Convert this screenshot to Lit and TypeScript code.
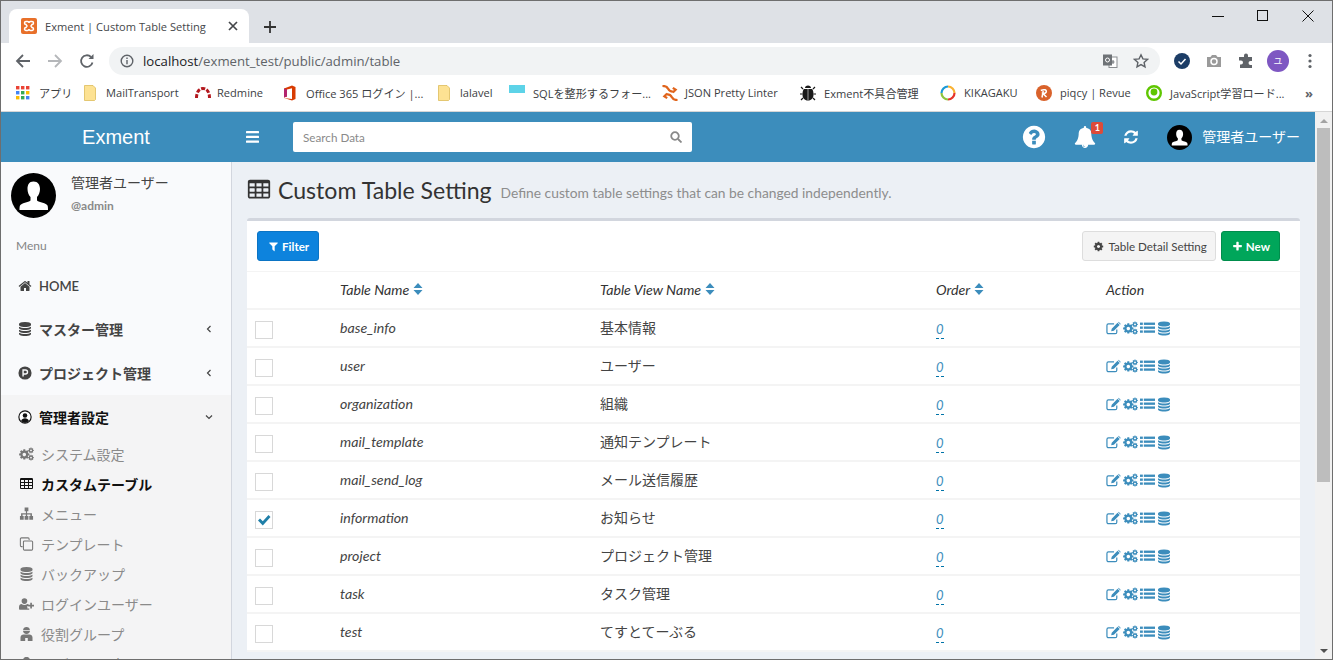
import { LitElement, html, css, svg } from "lit";
import { customElement } from "lit/decorators.js";

// font-awesome 4 style glyphs, 1792 box
const P = {
  database: "M896 768q237 0 443-43t325-127v170q0 69-103 128t-280 93.5-385 34.5-385-34.5-280-93.5-103-128v-170q119 84 325 127t443 43zm0 768q237 0 443-43t325-127v170q0 69-103 128t-280 93.5-385 34.5-385-34.5-280-93.5-103-128v-170q119 84 325 127t443 43zm0-384q237 0 443-43t325-127v170q0 69-103 128t-280 93.5-385 34.5-385-34.5-280-93.5-103-128v-170q119 84 325 127t443 43zm0-1152q208 0 385 34.5t280 93.5 103 128v128q0 69-103 128t-280 93.5-385 34.5-385-34.5-280-93.5-103-128v-128q0-69 103-128t280-93.5 385-34.5z",
  table: "M576 1376v-192q0-14-9-23t-23-9h-320q-14 0-23 9t-9 23v192q0 14 9 23t23 9h320q14 0 23-9t9-23zm0-384v-192q0-14-9-23t-23-9h-320q-14 0-23 9t-9 23v192q0 14 9 23t23 9h320q14 0 23-9t9-23zm512 384v-192q0-14-9-23t-23-9h-320q-14 0-23 9t-9 23v192q0 14 9 23t23 9h320q14 0 23-9t9-23zm-512-768v-192q0-14-9-23t-23-9h-320q-14 0-23 9t-9 23v192q0 14 9 23t23 9h320q14 0 23-9t9-23zm512 384v-192q0-14-9-23t-23-9h-320q-14 0-23 9t-9 23v192q0 14 9 23t23 9h320q14 0 23-9t9-23zm512 384v-192q0-14-9-23t-23-9h-320q-14 0-23 9t-9 23v192q0 14 9 23t23 9h320q14 0 23-9t9-23zm-512-768v-192q0-14-9-23t-23-9h-320q-14 0-23 9t-9 23v192q0 14 9 23t23 9h320q14 0 23-9t9-23zm512 384v-192q0-14-9-23t-23-9h-320q-14 0-23 9t-9 23v192q0 14 9 23t23 9h320q14 0 23-9t9-23zm0-384v-192q0-14-9-23t-23-9h-320q-14 0-23 9t-9 23v192q0 14 9 23t23 9h320q14 0 23-9t9-23zm128-320v1088q0 66-47 113t-113 47h-1344q-66 0-113-47t-47-113v-1088q0-66 47-113t113-47h1344q66 0 113 47t47 113z",
  filter: "M1595 295q17 41-14 70l-493 493v742q0 42-39 59-13 5-25 5-27 0-45-19l-256-256q-19-19-19-45v-486l-493-493q-31-29-14-70 17-39 59-39h1280q42 0 59 39z",
  bell: "M912 1696q0-16-16-16-59 0-101.5-42.5t-42.5-101.5q0-16-16-16t-16 16q0 73 51.5 124.5t124.5 51.5q16 0 16-16zm816-288q0 52-38 90t-90 38h-448q0 106-75 181t-181 75-181-75-75-181h-448q-52 0-90-38t-38-90q50-42 91-88t85-119.5 74.5-158.5 50-206 19.5-260q0-152 117-282.5t307-158.5q-8-19-8-39 0-40 28-68t68-28 68 28 28 68q0 20-8 39 190 28 307 158.5t117 282.5q0 139 19.5 260t50 206 74.5 158.5 85 119.5 91 88z",
  refresh: "M1639 1056q0 5-1 7-64 268-268 434.5t-478 166.5q-146 0-282.5-55t-243.5-157l-129 129q-19 19-45 19t-45-19-19-45v-448q0-26 19-45t45-19h448q26 0 45 19t19 45-19 45l-137 137q71 66 161 102t187 36q134 0 250-65t186-179q11-17 53-117 8-23 30-23h192q13 0 22.5 9.5t9.5 22.5zm25-800v448q0 26-19 45t-45 19h-448q-26 0-45-19t-19-45 19-45l138-138q-148-137-349-137-134 0-250 65t-186 179q-11 17-53 117-8 23-30 23h-199q-13 0-22.5-9.5t-9.5-22.5v-7q65-268 270-434.5t480-166.5q146 0 284 55.5t245 156.5l130-129q19-19 45-19t45 19 19 45z",
  question: "M1024 1376v-192q0-14-9-23t-23-9h-192q-14 0-23 9t-9 23v192q0 14 9 23t23 9h192q14 0 23-9t9-23zm256-672q0-88-55.5-163t-138.5-116-170-41q-243 0-371 213-15 24 8 42l132 100q7 6 19 6 16 0 25-12 53-68 86-92 34-24 86-24 48 0 85.5 26t37.5 59q0 38-20 61t-68 45q-63 28-115.5 86.5t-52.5 125.5v36q0 14 9 23t23 9h192q14 0 23-9t9-23q0-19 21.5-49.5t54.5-49.5q32-18 49-28.5t46-35 44.5-48 28-60.5 12.5-81zm384 192q0 209-103 385.5t-279.5 279.5-385.5 103-385.5-103-279.5-279.5-103-385.5 103-385.5 279.5-279.5 385.5-103 385.5 103 279.5 279.5 103 385.5z",
  plus: "M1600 736v192q0 40-28 68t-68 28h-416v416q0 40-28 68t-68 28h-192q-40 0-68-28t-28-68v-416h-416q-40 0-68-28t-28-68v-192q0-40 28-68t68-28h416v-416q0-40 28-68t68-28h192q40 0 68 28t28 68v416h416q40 0 68 28t28 68z",
  cog: "M1152 896q0-106-75-181t-181-75-181 75-75 181 75 181 181 75 181-75 75-181zm512-109v222q0 12-8 23t-20 13l-185 28q-19 54-39 91 35 50 107 138 10 12 10 25t-9 23q-27 37-99 108t-94 71q-12 0-26-9l-138-108q-44 23-91 38-16 136-29 186-7 28-36 28h-222q-14 0-24.5-8.5t-11.5-21.5l-28-184q-49-16-90-37l-141 107q-10 9-25 9-14 0-25-11-126-114-165-168-7-10-7-23 0-12 8-23 15-21 51-66.5t54-70.5q-27-50-41-99l-183-27q-13-2-21-12.5t-8-23.5v-222q0-12 8-23t19-13l186-28q14-46 39-92-40-57-107-138-10-12-10-24 0-10 9-23 26-36 98.5-107.5t94.5-71.5q13 0 26 10l138 107q44-23 91-38 16-136 29-186 7-28 36-28h222q14 0 24.5 8.5t11.5 21.5l28 184q49 16 90 37l142-107q9-9 24-9 13 0 25 10 129 119 165 170 7 8 7 22 0 12-8 23-15 21-51 66.5t-54 70.5q26 50 41 98l183 28q13 2 21 12.5t8 23.5z",
  home: "M1472 992v480q0 26-19 45t-45 19h-384v-384h-256v384h-384q-26 0-45-19t-19-45v-480q0-1 .5-3t.5-3l575-474 575 474q1 2 1 6zm223-69l-62 74q-8 9-21 11h-3q-13 0-21-7l-692-577-692 577q-12 8-24 7-13-2-21-11l-62-74q-8-10-7-23.5t11-21.5l719-599q32-26 76-26t76 26l244 204v-195q0-14 9-23t23-9h192q14 0 23 9t9 23v408l219 182q10 8 11 21.5t-7 23.5z",
};

const fa = (d: string, cls = "") => html`<svg class="fa ${cls}" viewBox="0 0 1792 1792" fill="currentColor"><path d=${d}></path></svg>`;

const cogs = (cls = "") => html`<svg class="fa ${cls}" viewBox="0 0 2048 1792" fill="currentColor">
  <path transform="translate(-100 130) scale(.92)" d=${P.cog}></path>
  <path transform="translate(1190 -40) scale(.5)" d=${P.cog}></path>
  <path transform="translate(1190 940) scale(.5)" d=${P.cog}></path>
</svg>`;

const list = (cls = "") => html`<svg class="fa ${cls}" viewBox="0 0 18 14" fill="currentColor">
  ${[0.5, 5.2, 9.9].map((y) => svg`<rect x="0" y=${y} width="3.4" height="2.8"></rect><rect x="4.6" y=${y} width="13.4" height="2.8"></rect>`)}
</svg>`;

const edit = (cls = "") => html`<svg class="fa ${cls}" viewBox="0 0 16 14">
  <path d="M11.5 8.5v3a1.6 1.6 0 0 1-1.6 1.6H2.6A1.6 1.6 0 0 1 1 11.500V4.200a1.600 1.600 0 0 1 1.600-1.600h6" fill="none" stroke="currentColor" stroke-width="1.300"></path>
  <path d="M5.500 10.500l.6-2.800 6.200-6.200 2.300 2.300-6.200 6.200zM12.900 .9l.6-.6 2.300 2.300-.6.600z" fill="currentColor"></path>
</svg>`;

const avatar = (cls = "") => html`<svg class="avatar ${cls}" viewBox="0 0 45 45">
  <circle cx="22.500" cy="22.500" r="22.500" fill="#000"></circle>
  <path fill="#fff" d="M22.500 8.500c4.500 0 6.500 3.500 6.500 7.500 0 3.200-1.200 6.200-3 8v3.500c2 1.800 9.500 2.500 10.500 5 .5 1.200.5 3 .5 4.500H8.500c0-1.500 0-3.300.5-4.500 1-2.500 8.500-3.200 10.500-5V24c-1.800-1.800-3-4.800-3-8 0-4 1.500-7.500 6-7.500z"></path>
</svg>`;

const sub = {
  sitemap: html`<svg class="fa" viewBox="0 0 16 14" fill="currentColor"><path d="M6 0h4v4H8.600v2.200h5.200V9H15v4h-4V9h1.200V7.600H8.700V9H10v4H6V9h1.300V7.600H3.800V9H5v4H1V9h1.200V6.200h5.200V4H6z"></path></svg>`,
  clone: html`<svg class="fa" viewBox="0 0 16 16" fill="none" stroke="currentColor" stroke-width="1.200"><path d="M11 3.500V2.200a1.200 1.200 0 0 0-1.200-1.200H2.200A1.200 1.200 0 0 0 1 2.200v7.600A1.200 1.200 0 0 0 2.200 11h1.300"></path><rect x="4.500" y="4.500" width="10.500" height="10.500" rx="1.200"></rect></svg>`,
  userPlus: html`<svg class="fa" viewBox="0 0 18 14" fill="currentColor"><circle cx="6.500" cy="3.500" r="3.400"></circle><path d="M0 13v-2.500C0 8.500 1.500 7 3 7c1 .8 2.200 1.200 3.500 1.200S9 7.800 10 7c.6 0 1.200.3 1.700.7v1.800H10v3h2.300V14H1a1 1 0 0 1-1-1zM13.500 5.500h2v2.500H18v2h-2.500v2.500h-2V10H11V8h2.500z"></path></svg>`,
  group: html`<svg class="fa" viewBox="0 0 14 14" fill="currentColor"><path d="M7 0c2 0 3.200 1 3.400 3H3.600C3.800 1 5 0 7 0zM3.500 3.800h7c0 1.800-1.500 3.200-3.500 3.200S3.500 5.600 3.500 3.800zM1 14v-3.500C1 8.800 2.500 7.500 4 7.500h6c1.500 0 3 1.300 3 3V14H8.300v-3H5.700v3z"></path></svg>`,
};

const tableRows: { name: string; view: string; checked?: boolean }[] = [
  { name: "base_info", view: "基本情報" },
  { name: "user", view: "ユーザー" },
  { name: "organization", view: "組織" },
  { name: "mail_template", view: "通知テンプレート" },
  { name: "mail_send_log", view: "メール送信履歴" },
  { name: "information", view: "お知らせ", checked: true },
  { name: "project", view: "プロジェクト管理" },
  { name: "task", view: "タスク管理" },
  { name: "test", view: "てすとてーぶる" },
];

const folder = html`<svg class="bm-icon" viewBox="0 0 16 16"><path d="M2.500 .5h8.500l2.500 2.500v11.500l-1 1h-10z" fill="#fde293" stroke="#d9b44a" stroke-width=".7"></path></svg>`;

const bookmarks = [
  {
    text: "アプリ",
    icon: html`<svg class="bm-icon apps" viewBox="0 0 14 14">
      ${["#ea4335", "#ea4335", "#ea4335", "#4285f4", "#34a853", "#fbbc04", "#fbbc04", "#34a853", "#4285f4"].map(
        (c, i) => svg`<rect x=${(i % 3) * 5} y=${Math.floor(i / 3) * 5} width="3.400" height="3.400" fill=${c}></rect>`
      )}
    </svg>`,
  },
  { text: "MailTransport", icon: folder },
  {
    text: "Redmine",
    icon: html`<svg class="bm-icon wide" viewBox="0 0 18 16" fill="none" stroke="#b3171d" stroke-width="3" stroke-dasharray="4 1.500"><path d="M3.500 13C3.500 7 6 3.500 10 3.500s6.500 3.500 6.500 9.500"></path></svg>`,
  },
  {
    text: "Office 365 ログイン |...",
    icon: html`<svg class="bm-icon" viewBox="0 0 16 16"><path d="M2 3.500L10 .5l3.500 1.500v12l-3.500 1.500-8-2.500 8 1V3.200l-5 1.300v7L2 12.500z" fill="#d83b01"></path><path d="M2 3.500l3 1v7l-3 1z" fill="#b3246e"></path></svg>`,
  },
  { text: "lalavel", icon: folder },
  { text: "SQLを整形するフォー...", icon: html`<svg class="bm-icon" viewBox="0 0 16 16"><rect y="0" width="16" height="8" fill="#5dd3e8"></rect></svg>` },
  {
    text: "JSON Pretty Linter",
    icon: html`<svg class="bm-icon wide" viewBox="0 0 18 17" fill="none" stroke="#e0641c" stroke-width="2.400"><path d="M1 1c4 0 5 1 6 3s2 3 5 3M12 3l3 2-3 3M17 16c-4 0-5-1-6-3s-2-3-5-3M6 14l-3-2 3-3"></path></svg>`,
  },
  {
    text: "Exment不具合管理",
    icon: html`<svg class="bm-icon" viewBox="0 0 16 16"><path d="M5 3c0-1.500 1.200-2.500 3-2.500S11 1.500 11 3zM3.800 4h8.400c1 1.500 1.300 3.500 1.300 5.500 0 3.500-2 6-5.500 6s-5.500-2.500-5.500-6c0-2 .3-4 1.300-5.500z" fill="#1a1a1a"></path><rect x="7.500" y="4" width="1" height="11" fill="#999"></rect><path d="M3 4L1 2M13 4l2-2M2.500 9H0M13.500 9H16M3 13l-2 2M13 13l2 2" stroke="#1a1a1a" stroke-width="1.200"></path></svg>`,
  },
  {
    text: "KIKAGAKU",
    icon: html`<svg class="bm-icon" viewBox="0 0 16 16" fill="none" stroke-width="2.200"><path d="M8 1.500a6.500 6.500 0 0 1 6.500 6.500" stroke="#f9b233"></path><path d="M14.500 8A6.500 6.500 0 0 1 8 14.500" stroke="#e5342b"></path><path d="M8 14.500A6.500 6.500 0 0 1 1.500 8" stroke="#8dc63f"></path><path d="M1.500 8A6.500 6.500 0 0 1 8 1.500" stroke="#1c9ad6"></path></svg>`,
  },
  {
    text: "piqcy | Revue",
    icon: html`<svg class="bm-icon" viewBox="0 0 16 16"><circle cx="8" cy="8" r="8" fill="#d9622b"></circle><path d="M6 12.500L7.200 6M4.800 5.500c3-1.500 6-.8 5.500 1.200-.3 1.200-1.800 1.800-3.300 1.800L10.500 12" fill="none" stroke="#fff" stroke-width="1.500"></path></svg>`,
  },
  {
    text: "JavaScript学習ロード...",
    icon: html`<svg class="bm-icon" viewBox="0 0 16 16"><circle cx="8" cy="8" r="6.800" fill="none" stroke="#5fc600" stroke-width="2.400"></circle><circle cx="8" cy="7" r="3.400" fill="#5fc600"></circle></svg>`,
  },
];

const topMenu = [
  { icon: fa(P.database), label: "マスター管理" },
  {
    icon: html`<svg class="fa" viewBox="0 0 16 16"><circle cx="8" cy="8" r="7.500" fill="currentColor"></circle><path d="M5.800 12V4.500h2.700a2.300 2.300 0 0 1 0 4.700H5.800" fill="none" stroke="#f9fafc" stroke-width="1.600"></path></svg>`,
    label: "プロジェクト管理",
  },
];

const subMenu = [
  { icon: cogs(), label: "システム設定" },
  { icon: fa(P.table), label: "カスタムテーブル", active: true },
  { icon: sub.sitemap, label: "メニュー" },
  { icon: sub.clone, label: "テンプレート" },
  { icon: fa(P.database), label: "バックアップ" },
  { icon: sub.userPlus, label: "ログインユーザー" },
  { icon: sub.group, label: "役割グループ" },
  { icon: sub.group, label: "ログイン設定" },
];

const sort = html`<svg class="sort" viewBox="0 0 10 12" fill="currentColor"><path d="M5 0l4.500 5H.5zM5 12L.5 7h9z"></path></svg>`;

@customElement("app-root")
export class AppRoot extends LitElement {
  static styles = css`
    :host {
      display: flex;
      flex-direction: column;
      box-sizing: border-box;
      width: 1333px;
      height: 660px;
      overflow: hidden;
      border: 1px solid #6e6e6e;
      background: #fff;
      font-family: Lato, "Noto Sans CJK JP", sans-serif;
      font-size: 14px;
      color: #333;
    }
    .fa {
      display: block;
      flex: none;
      width: 14px;
      height: 14px;
    }
    .avatar {
      display: block;
      flex: none;
    }

    /* browser frame */
    .titlebar {
      display: flex;
      align-items: flex-end;
      height: 42px;
      flex: none;
      background: #dee1e6;
      font-family: "Open Sans", "Noto Sans CJK JP", sans-serif;
    }
    .tab {
      display: flex;
      align-items: center;
      box-sizing: border-box;
      width: 240px;
      height: 34px;
      margin-left: 8px;
      padding: 0 11px 0 12px;
      background: #fff;
      border-radius: 8px 8px 0 0;
      font-size: 11.1px;
      color: #45474a;
    }
    .tab-icon {
      width: 16px;
      height: 16px;
      margin-right: 8px;
    }
    .tab-title {
      flex: 1;
      white-space: nowrap;
    }
    .tab-close,
    .new-tab {
      display: block;
      flex: none;
    }
    .tab-close {
      width: 10px;
      height: 10px;
    }
    .new-tab {
      width: 14px;
      height: 14px;
      margin: 0 0 9px 14px;
    }
    .win-controls {
      display: flex;
      align-items: center;
      gap: 33px;
      margin-left: auto;
      margin-right: 18px;
      align-self: flex-start;
      height: 30px;
    }
    .win-controls svg {
      display: block;
      width: 12px;
      height: 12px;
    }
    .toolbar {
      display: flex;
      align-items: center;
      flex: none;
      box-sizing: border-box;
      height: 37px;
      padding: 0 14px 2px;
      font-family: "Open Sans", "Noto Sans CJK JP", sans-serif;
    }
    .nav {
      display: flex;
      gap: 16px;
      margin-right: 14px;
    }
    .nav svg {
      display: block;
      width: 16px;
      height: 16px;
    }
    .omnibox {
      display: flex;
      align-items: center;
      width: 1051px;
      height: 28px;
      box-sizing: border-box;
      padding: 0 11px;
      border-radius: 14px;
      background: #f1f3f4;
      font-size: 13.2px;
      color: #5f6368;
      flex: none;
    }
    .omnibox .info {
      display: block;
      width: 14px;
      height: 14px;
      margin-right: 9px;
    }
    .host {
      color: #202124;
    }
    .omni-right {
      display: flex;
      align-items: center;
      gap: 15px;
      margin-left: auto;
    }
    .omni-right svg {
      display: block;
      width: 16px;
      height: 16px;
    }
    .ext {
      display: flex;
      align-items: center;
      gap: 16px;
      margin-left: 14px;
    }
    .ext svg {
      display: block;
      width: 16px;
      height: 16px;
    }
    .profile {
      display: flex;
      align-items: center;
      justify-content: center;
      width: 22px;
      height: 22px;
      margin-left: -3px;
      border-radius: 50%;
      background: #7e57c2;
      color: #fff;
      font-size: 9px;
    }
    .ext .dots {
      width: 4px;
      margin-left: 3px;
    }
    .bookmarks {
      display: grid;
      grid-template-columns: 66px 111px 89px 154px 73px 152px 139px 140px 96px 110px 159px 16px;
      align-items: center;
      flex: none;
      box-sizing: border-box;
      height: 32px;
      padding: 0 0 6px 15px;
      border-bottom: 1px solid #d6d6d6;
      font-family: "Open Sans", "Noto Sans CJK JP", sans-serif;
      font-size: 11.1px;
      color: #3c4043;
    }
    .bm {
      display: flex;
      align-items: center;
      gap: 8px;
      white-space: nowrap;
    }
    .bm-icon {
      display: block;
      flex: none;
      width: 16px;
      height: 16px;
    }
    .bm-icon.apps {
      width: 14px;
      height: 14px;
      margin-right: 1px;
    }
    .bm-icon.wide {
      width: 18px;
      margin-right: -2px;
    }
    .more {
      color: #5f6368;
      font-weight: 700;
      font-size: 13px;
    }

    /* page */
    .page {
      display: flex;
      flex: 1;
      min-height: 0;
    }
    .app {
      display: flex;
      flex-direction: column;
      width: 1314px;
      flex: none;
    }
    .scrollbar {
      display: flex;
      flex-direction: column;
      flex: 1;
      background: #f1f1f1;
      align-items: center;
    }
    .scroll-up,
    .scroll-down {
      display: block;
      width: 0;
      height: 0;
      border: 4px solid transparent;
    }
    .scroll-up {
      margin: 7px 0 5px;
      border-top: 0;
      border-bottom: 4px solid #a3a3a3;
    }
    .scroll-down {
      margin: auto 0 6px;
      border-bottom: 0;
      border-top: 4px solid #505050;
    }
    .thumb {
      width: 13px;
      height: 354px;
      background: #bdbdbd;
    }
    .topbar {
      display: flex;
      align-items: center;
      flex: none;
      height: 50px;
      background: #3c8dbc;
      color: #fff;
    }
    .logo {
      width: 230px;
      flex: none;
      text-align: center;
      font-family: "Liberation Sans", sans-serif;
      font-size: 20px;
    }
    .burger {
      display: block;
      width: 13px;
      height: 12px;
      margin: 0 34px 0 15px;
    }
    .search {
      display: flex;
      align-items: center;
      justify-content: space-between;
      box-sizing: border-box;
      width: 399px;
      height: 30px;
      padding: 0 10px;
      border-radius: 2px;
      background: #fff;
      color: #8a8a8a;
      font-size: 11.7px;
    }
    .search svg {
      display: block;
      width: 12px;
      height: 12px;
      color: #888;
    }
    .top-right {
      display: flex;
      align-items: center;
      margin-left: auto;
      padding-right: 15px;
    }
    .top-right .help {
      width: 26px;
      height: 26px;
    }
    .bell-wrap {
      position: relative;
      margin-left: 27px;
    }
    .bell-wrap .fa {
      width: 22px;
      height: 22px;
    }
    .badge {
      position: absolute;
      top: -4px;
      left: 17px;
      width: 12px;
      height: 12px;
      border-radius: 2px;
      background: #dd4b39;
      color: #fff;
      font-size: 9px;
      font-weight: 700;
      line-height: 12px;
      text-align: center;
    }
    .top-right .refresh {
      width: 16px;
      height: 16px;
      margin-left: 27px;
    }
    .top-right .avatar {
      width: 25px;
      height: 25px;
      margin-left: 28px;
      margin-right: 10px;
    }
    .user-name {
      font-size: 14px;
      line-height: 18px;
      white-space: nowrap;
    }
    .body {
      display: flex;
      flex: 1;
      min-height: 0;
    }

    /* sidebar */
    .sidebar {
      display: flex;
      flex-direction: column;
      flex: none;
      box-sizing: border-box;
      width: 231px;
      overflow: hidden;
      background: #f9fafc;
      border-right: 1px solid #d2d6de;
    }
    .panel {
      display: flex;
      padding: 11px 10px 0;
      height: 62px;
      flex: none;
    }
    .panel .avatar {
      width: 45px;
      height: 45px;
    }
    .panel-text {
      margin-left: 15px;
      padding-top: 1px;
    }
    .panel-name {
      font-size: 14px;
      line-height: 18px;
      color: #444;
    }
    .panel-sub {
      margin-top: 6px;
      font-size: 12px;
      line-height: 15px;
      font-weight: 700;
      color: #8a8a8a;
    }
    .menu-head {
      flex: none;
      padding: 2px 15px 0;
      height: 30px;
      font-size: 12px;
      line-height: 17px;
      color: #848484;
    }
    .item {
      display: flex;
      align-items: center;
      flex: none;
      height: 44px;
      padding: 0 17px;
      font-size: 14px;
      font-weight: 700;
      color: #444;
    }
    .item.home {
      height: 38px;
      font-size: 13px;
      margin-bottom: 2px;
      font-weight: 600;
    }
    .item .fa {
      width: 14px;
      height: 14px;
    }
    .item-label {
      margin-left: 7px;
      white-space: nowrap;
    }
    .item .chev {
      display: block;
      width: 8px;
      height: 8px;
      margin-left: auto;
      margin-right: 1px;
    }
    .open {
      flex: 1;
      background: #f4f4f5;
    }
    .open .item {
      color: #111;
    }
    .sub {
      padding-bottom: 4px;
    }
    .sub-item {
      display: flex;
      align-items: center;
      height: 30px;
      padding-left: 18px;
      font-size: 14px;
      color: #8a8a8a;
    }
    .sub-item .fa {
      width: 15px;
      height: 14px;
    }
    .sub-item .fa,
    .sub-item svg {
      color: #777;
    }
    .sub-item span {
      margin-left: 7px;
      white-space: nowrap;
    }
    .sub-item.active {
      font-weight: 700;
      color: #111;
    }
    .sub-item.active .fa {
      color: #111;
    }

    /* content */
    .content {
      flex: 1;
      min-width: 0;
      overflow: hidden;
      background: #ecf0f5;
      padding: 0 15px;
    }
    .heading {
      display: flex;
      align-items: center;
      height: 56px;
      box-sizing: border-box;
      padding-bottom: 1px;
    }
    .heading .fa {
      width: 24px;
      height: 24px;
      color: #333;
    }
    .heading h1 {
      margin: 0 0 0 7px;
      font-size: 23.1px;
      font-weight: 400;
      color: #333;
      white-space: nowrap;
    }
    .heading small {
      margin: 5px 0 0 9px;
      font-size: 13.8px;
      color: #8d8d8d;
      white-space: nowrap;
    }
    .box {
      background: #fff;
      border-top: 3px solid #d2d6de;
      border-radius: 3px 3px 0 0;
    }
    .box-tools {
      display: flex;
      align-items: center;
      box-sizing: border-box;
      height: 51px;
      padding: 0 20px 0 10px;
      border-bottom: 1px solid #f4f4f4;
    }
    .btn {
      display: flex;
      align-items: center;
      box-sizing: border-box;
      height: 30px;
      border-radius: 3px;
      border: 1px solid transparent;
      padding: 0 9px 0 10px;
      font-size: 11.6px;
      font-weight: 700;
      color: #fff;
      white-space: nowrap;
    }
    .btn .fa {
      width: 11px;
      height: 11px;
      margin-right: 3px;
    }
    .btn-filter {
      background: #0d83dd;
      border-color: #0b74c4;
    }
    .btn-default {
      margin-left: auto;
      padding-right: 8px;
      background: #f4f4f4;
      border-color: #ddd;
      color: #444;
      font-weight: 400;
    }
    .btn-default .fa {
      margin-right: 4px;
    }
    .btn-new {
      margin-left: 5px;
      background: #00a65a;
      border-color: #008d4c;
    }
    .row {
      display: grid;
      grid-template-columns: 93px 260px 336px 170px 1fr;
      align-items: center;
      box-sizing: border-box;
      height: 38px;
      border-bottom: 2px solid #f4f4f4;
      font-size: 14.2px;
    }
    .row.head {
      font-style: italic;
      color: #333;
    }
    .th {
      display: flex;
      align-items: center;
      gap: 4px;
      padding-bottom: 2px;
    }
    .sort {
      display: block;
      width: 10px;
      height: 12px;
      color: #3c8dbc;
    }
    .cell-name {
      font-style: italic;
      color: #444;
      padding-bottom: 2px;
    }
    .cell-view {
      font-size: 14px;
      color: #444;
      padding-bottom: 2px;
    }
    .order {
      justify-self: start;
      margin-top: 3px;
      font-style: italic;
      color: #3c8dbc;
      font-size: 13px;
      line-height: 17px;
      border-bottom: 1px dashed #0073a8;
    }
    .check {
      display: flex;
      align-items: center;
      justify-content: center;
      box-sizing: border-box;
      width: 18px;
      height: 18px;
      margin: 4px 0 0 8px;
      border: 1px solid #d8d8d8;
      background: #fff;
    }
    .check svg {
      display: block;
      width: 14px;
      height: 14px;
      color: #1f7fa8;
    }
    .actions {
      display: flex;
      align-items: center;
      gap: 2px;
      color: #3c8dbc;
    }
    .actions .fa {
      width: 15px;
      height: 14px;
    }
    .actions .a-db {
      width: 14px;
      height: 15px;
    }
  `;

  private renderChrome() {
    return html`
      <div class="titlebar">
        <div class="tab">
          <svg class="tab-icon" viewBox="0 0 16 16">
            <rect width="16" height="16" rx="2" fill="#e8702a"></rect>
            <path d="M5 3.500h1.500a1.500 1.500 0 0 1 1.500 1.500 1.500 1.500 0 0 1 1.500-1.500H11a1.500 1.500 0 0 1 0 3l-1 1.500 1 1.500a1.500 1.500 0 0 1 0 3H9.500A1.500 1.500 0 0 1 8 11a1.500 1.500 0 0 1-1.500 1.500H5a1.500 1.500 0 0 1 0-3L6 8 5 6.500a1.500 1.500 0 0 1 0-3z" fill="none" stroke="#fff" stroke-width="1.500"></path>
          </svg>
          <span class="tab-title">Exment | Custom Table Setting</span>
          <svg class="tab-close" viewBox="0 0 10 10" stroke="#45474a" stroke-width="1.700"><path d="M1 1l8 8M9 1l-8 8"></path></svg>
        </div>
        <svg class="new-tab" viewBox="0 0 14 14" stroke="#333" stroke-width="1.800"><path d="M7 1v12M1 7h12"></path></svg>
        <div class="win-controls">
          <svg viewBox="0 0 12 12" stroke="#111" stroke-width="1"><path d="M0 6.500h12"></path></svg>
          <svg viewBox="0 0 12 12" stroke="#111" stroke-width="1" fill="none"><rect x=".5" y=".5" width="10" height="10"></rect></svg>
          <svg viewBox="0 0 12 12" stroke="#111" stroke-width="1"><path d="M.5 .5l11 11M11.500 .5l-11 11"></path></svg>
        </div>
      </div>
      <div class="toolbar">
        <div class="nav">
          <svg viewBox="0 0 16 16" fill="none" stroke="#5f6368" stroke-width="1.800"><path d="M15 8H2M8 2L2 8l6 6"></path></svg>
          <svg viewBox="0 0 16 16" fill="none" stroke="#b5b7ba" stroke-width="1.800"><path d="M1 8h13M8 2l6 6-6 6"></path></svg>
          <svg viewBox="0 0 16 16" fill="none" stroke="#5f6368" stroke-width="1.800"><path d="M13.500 9.500A5.800 5.800 0 1 1 12 4"></path><path d="M14.500 1v5h-5z" fill="#5f6368" stroke="none"></path></svg>
        </div>
        <div class="omnibox">
          <svg class="info" viewBox="0 0 14 14" fill="none" stroke="#5f6368" stroke-width="1.400"><circle cx="7" cy="7" r="5.800"></circle><path d="M7 6v4.200M7 3.600v1.300"></path></svg>
          <span><span class="host">localhost</span>/exment_test/public/admin/table</span>
          <div class="omni-right">
            <svg viewBox="0 0 16 16"><rect x="7" y="4" width="8" height="10.500" fill="#fff" stroke="#8a8d90"></rect><rect x="1" y="1.500" width="9" height="11" fill="#6e7276"></rect><circle cx="5.500" cy="7" r="2" fill="none" stroke="#fff"></circle><path d="M11 7v4M9.500 9h3" stroke="#6e7276"></path></svg>
            <svg viewBox="0 0 16 16" fill="none" stroke="#5f6368" stroke-width="1.400"><path d="M8 1.800l1.900 4.100 4.500.5-3.300 3 .9 4.500L8 11.600 4 13.900l.9-4.500-3.300-3 4.500-.5z"></path></svg>
          </div>
        </div>
        <div class="ext">
          <svg viewBox="0 0 16 16"><circle cx="8" cy="8" r="8" fill="#1c3d66"></circle><path d="M4.500 8.500L7 11l4.500-5" fill="none" stroke="#fff" stroke-width="1.500"></path></svg>
          <svg viewBox="0 0 16 16"><path d="M1 4h3.500L6 2h4l1.500 2H15v10H1z" fill="#9a9a9a"></path><circle cx="8" cy="8.500" r="3" fill="none" stroke="#fff" stroke-width="1.500"></circle></svg>
          <svg viewBox="0 0 16 16"><path d="M6 2.500a2 2 0 0 1 4 0V4h4v4h-1.500a2 2 0 0 0 0 4H14v3H2v-3.500h1a2 2 0 0 0 0-4H1V4h5z" fill="#5f6368"></path></svg>
          <span class="profile">ユ</span>
          <svg class="dots" viewBox="0 0 4 16" fill="#5f6368"><circle cx="2" cy="2.500" r="1.600"></circle><circle cx="2" cy="8" r="1.600"></circle><circle cx="2" cy="13.500" r="1.600"></circle></svg>
        </div>
      </div>
      <div class="bookmarks">
        ${bookmarks.map((b) => html`<div class="bm">${b.icon}<span>${b.text}</span></div>`)}
        <span class="more">»</span>
      </div>
    `;
  }

  private renderSidebar() {
    const chevLeft = html`<svg class="chev" viewBox="0 0 8 8" fill="none" stroke="#444" stroke-width="1.200"><path d="M5.500 1L2.500 4l3 3"></path></svg>`;
    return html`
      <aside class="sidebar">
        <div class="panel">
          ${avatar()}
          <div class="panel-text">
            <div class="panel-name">管理者ユーザー</div>
            <div class="panel-sub">@admin</div>
          </div>
        </div>
        <div class="menu-head">Menu</div>
        <div class="item home">${fa(P.home)}<span class="item-label">HOME</span></div>
        ${topMenu.map((m) => html`<div class="item">${m.icon}<span class="item-label">${m.label}</span>${chevLeft}</div>`)}
        <div class="open">
          <div class="item">
            <svg class="fa" viewBox="0 0 16 16"><circle cx="8" cy="8" r="7" fill="#fff" stroke="#111" stroke-width="1.300"></circle><circle cx="8" cy="6.300" r="2.600" fill="#111"></circle><path d="M3.500 12.500c.6-2 2.500-3 4.500-3s3.900 1 4.500 3C11 14 9.500 14.500 8 14.500S5 14 3.500 12.500z" fill="#111"></path></svg>
            <span class="item-label">管理者設定</span>
            <svg class="chev" viewBox="0 0 8 8" fill="none" stroke="#444" stroke-width="1.200"><path d="M1 2.500l3 3 3-3"></path></svg>
          </div>
          <div class="sub">
            ${subMenu.map((s) => html`<div class="sub-item ${s.active ? "active" : ""}">${s.icon}<span>${s.label}</span></div>`)}
          </div>
        </div>
      </aside>
    `;
  }

  private renderTable() {
    return html`
      <div class="row head">
        <span></span>
        <span class="th">Table Name ${sort}</span>
        <span class="th">Table View Name ${sort}</span>
        <span class="th">Order ${sort}</span>
        <span class="th">Action</span>
      </div>
      ${tableRows.map(
        (r) => html`
          <div class="row">
            <span class="check">
              ${r.checked ? html`<svg viewBox="0 0 14 14" fill="currentColor"><path d="M1 7.500l2-2 2.800 2.800L11.500 2l2 2-7.700 8.500z"></path></svg>` : ""}
            </span>
            <span class="cell-name">${r.name}</span>
            <span class="cell-view">${r.view}</span>
            <span class="order">0</span>
            <span class="actions">${edit()}${cogs()}${list()}${fa(P.database, "a-db")}</span>
          </div>
        `
      )}
    `;
  }

  render() {
    return html`
      ${this.renderChrome()}
      <div class="page">
        <div class="app">
          <header class="topbar">
            <div class="logo">Exment</div>
            <svg class="burger" viewBox="0 0 13 12" fill="#fff"><rect width="13" height="2.200" rx=".5"></rect><rect y="4.800" width="13" height="2.200" rx=".5"></rect><rect y="9.600" width="13" height="2.200" rx=".5"></rect></svg>
            <div class="search">
              <span>Search Data</span>
              <svg viewBox="0 0 12 12" fill="none" stroke="currentColor" stroke-width="1.800"><circle cx="5" cy="5" r="3.800"></circle><path d="M8 8l3.500 3.500"></path></svg>
            </div>
            <div class="top-right">
              ${fa(P.question, "help")}
              <div class="bell-wrap">${fa(P.bell)}<span class="badge">1</span></div>
              ${fa(P.refresh, "refresh")}
              ${avatar()}
              <span class="user-name">管理者ユーザー</span>
            </div>
          </header>
          <div class="body">
            ${this.renderSidebar()}
            <main class="content">
              <div class="heading">
                ${fa(P.table)}
                <h1>Custom Table Setting</h1>
                <small>Define custom table settings that can be changed independently.</small>
              </div>
              <section class="box">
                <div class="box-tools">
                  <div class="btn btn-filter">${fa(P.filter)}Filter</div>
                  <div class="btn btn-default">${fa(P.cog)}Table Detail Setting</div>
                  <div class="btn btn-new">${fa(P.plus)}New</div>
                </div>
                ${this.renderTable()}
              </section>
            </main>
          </div>
        </div>
        <div class="scrollbar">
          <span class="scroll-up"></span>
          <div class="thumb"></div>
          <span class="scroll-down"></span>
        </div>
      </div>
    `;
  }
}
